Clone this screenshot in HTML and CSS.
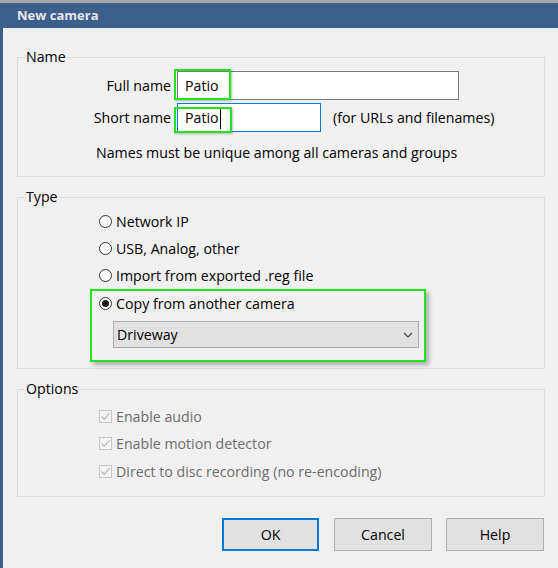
FILE: index.html
```html
<!DOCTYPE html>
<html lang="en">
<head>
<meta charset="utf-8">
<title>New camera</title>
<link rel="stylesheet" href="styles.css">
</head>
<body>
<div class="strip"></div>
<div class="window">
  <div class="titlebar">New camera</div>
  <div class="content">
    <fieldset class="group group-name">
      <legend>Name</legend>
      <div class="name-row row-full">
        <span class="field-label">Full name</span>
        <div class="field-wrap">
          <div class="input input-full">Patio</div>
          <span class="hl hl-full"></span>
        </div>
      </div>
      <div class="name-row row-short">
        <span class="field-label">Short name</span>
        <div class="field-wrap">
          <div class="input input-short">Patio<span class="caret"></span></div>
          <span class="hl hl-short"></span>
        </div>
        <span class="hint">(for URLs and filenames)</span>
      </div>
      <p class="note">Names must be unique among all cameras and groups</p>
    </fieldset>

    <fieldset class="group group-type">
      <legend>Type</legend>
      <div class="opt-row"><span class="radio"></span>Network IP</div>
      <div class="opt-row"><span class="radio"></span>USB, Analog, other</div>
      <div class="opt-row"><span class="radio"></span>Import from exported .reg file</div>
      <div class="copy-box">
        <div class="opt-row copy-row"><span class="radio checked"></span>Copy from another camera</div>
        <div class="select">
          <span>Driveway</span>
          <svg class="chev" width="10" height="6" viewBox="0 0 10 6"><path d="M1 1 L5 5 L9 1" fill="none" stroke="#444" stroke-width="1.1"/></svg>
        </div>
      </div>
    </fieldset>

    <fieldset class="group group-options">
      <legend>Options</legend>
      <div class="opt-row disabled"><span class="check"><svg width="11" height="11" viewBox="0 0 11 11"><path d="M1.5 5.5 L4.2 8.2 L9.6 2.4" fill="none" stroke="#bdbdbd" stroke-width="1.3"/></svg></span>Enable audio</div>
      <div class="opt-row disabled"><span class="check"><svg width="11" height="11" viewBox="0 0 11 11"><path d="M1.5 5.5 L4.2 8.2 L9.6 2.4" fill="none" stroke="#bdbdbd" stroke-width="1.3"/></svg></span>Enable motion detector</div>
      <div class="opt-row disabled"><span class="check"><svg width="11" height="11" viewBox="0 0 11 11"><path d="M1.5 5.5 L4.2 8.2 L9.6 2.4" fill="none" stroke="#bdbdbd" stroke-width="1.3"/></svg></span>Direct to disc recording (no re-encoding)</div>
    </fieldset>

    <div class="buttons">
      <button class="btn btn-ok">OK</button>
      <button class="btn btn-cancel">Cancel</button>
      <button class="btn btn-help">Help</button>
    </div>
  </div>
</div>
</body>
</html>
```

FILE: styles.css
```css
html, body {
  margin: 0;
  padding: 0;
  background: #f0f0f0;
  font-family: "Open Sans", "Noto Sans", sans-serif;
  font-size: 14.2px;
  color: #000;
}

.strip {
  height: 3px;
  background: #a8a8a8;
}

.window {
  border-left: 3px solid #3f5f88;
  height: 565px;
  box-sizing: border-box;
}

.titlebar {
  height: 25px;
  line-height: 25px;
  background: #3d5f8b;
  color: #e3e7ed;
  font-weight: bold;
  font-size: 13px;
  padding-left: 14px;
}

.content {
  padding: 19px 13px 0 14px;
}

.group {
  margin: 0 0 10px;
  padding: 0;
  border: 1px solid #dcdcdc;
  min-width: 0;
}

.group legend {
  margin-left: 6px;
  padding: 0 2px;
  line-height: 20px;
  font-size: 14.2px;
}

/* Name group */
.group-name {
  padding-bottom: 13px;
}

.name-row {
  display: flex;
  align-items: center;
  height: 29px;
}

.row-full {
  margin-top: 4px;
}

.row-short {
  margin-top: 3px;
}

.field-label {
  width: 153px;
  margin-right: 6px;
  text-align: right;
}

.field-wrap {
  position: relative;
}

.input {
  box-sizing: border-box;
  height: 29px;
  line-height: 27px;
  border: 1px solid #7a7a7a;
  background: #fff;
  padding-left: 7px;
}

.input-full {
  width: 282px;
}

.input-short {
  width: 144px;
  border-color: #0078d7;
}

.caret {
  display: inline-block;
  width: 1px;
  height: 20px;
  background: #000;
  vertical-align: middle;
  margin-left: 1px;
}

.hl {
  position: absolute;
  box-sizing: border-box;
  border: 2px solid #1fe41f;
  box-shadow: 1px 1px 2px rgba(0, 0, 0, 0.25);
}

.hl-full {
  left: -3px;
  top: -2px;
  width: 57px;
  height: 31px;
}

.hl-short {
  left: -3px;
  top: 4px;
  width: 58px;
  height: 26px;
}

.hint {
  margin-left: 12px;
}

.note {
  margin: 11px 0 0 78px;
  line-height: 20px;
}

/* Type group */
.group-type {
  padding-top: 1px;
  padding-bottom: 6px;
}

.opt-row {
  display: flex;
  align-items: center;
  height: 27px;
  padding-left: 81px;
}

.radio {
  box-sizing: border-box;
  width: 13px;
  height: 13px;
  border: 1px solid #333;
  border-radius: 50%;
  background: #fff;
  margin-right: 4px;
  display: flex;
  align-items: center;
  justify-content: center;
}

.radio.checked::after {
  content: "";
  width: 7px;
  height: 7px;
  border-radius: 50%;
  background: #1a1a1a;
}

.copy-box {
  box-sizing: border-box;
  width: 336px;
  margin-left: 72px;
  border: 2px solid #1fe41f;
  padding: 0 0 12px 7px;
  box-shadow: 3px 3px 4px rgba(0, 0, 0, 0.28);
}

.copy-row {
  padding-left: 0;
  height: 25px;
}

.select {
  box-sizing: border-box;
  width: 306px;
  height: 27px;
  margin: 5px 0 0 14px;
  border: 1px solid #adadad;
  background: #e1e1e1;
  display: flex;
  align-items: center;
  justify-content: space-between;
  padding: 0 5px 0 3px;
}

/* Options group */
.group-options {
  margin-bottom: 0;
  padding-top: 4px;
  padding-bottom: 11px;
}

.group-options .opt-row:last-child {
  height: 28px;
  padding-top: 1px;
  box-sizing: border-box;
}

.disabled {
  color: #6d6d6d;
}

.check {
  box-sizing: border-box;
  width: 13px;
  height: 13px;
  border: 1px solid #c6c6c6;
  background: #f4f4f4;
  margin-right: 4px;
  display: flex;
  align-items: center;
  justify-content: center;
}

/* Buttons */
.buttons {
  display: flex;
  justify-content: flex-end;
  margin: 21px 1px 0 0;
}

.btn {
  box-sizing: border-box;
  height: 33px;
  width: 98px;
  background: #e1e1e1;
  border: 1px solid #adadad;
  font-family: inherit;
  font-size: 14.2px;
  color: #000;
  padding: 0;
  margin: 0;
}

.btn-ok {
  width: 97px;
  border: 2px solid #0078d7;
}

.btn-cancel {
  margin-left: 15px;
}

.btn-help {
  margin-left: 14px;
}
```
